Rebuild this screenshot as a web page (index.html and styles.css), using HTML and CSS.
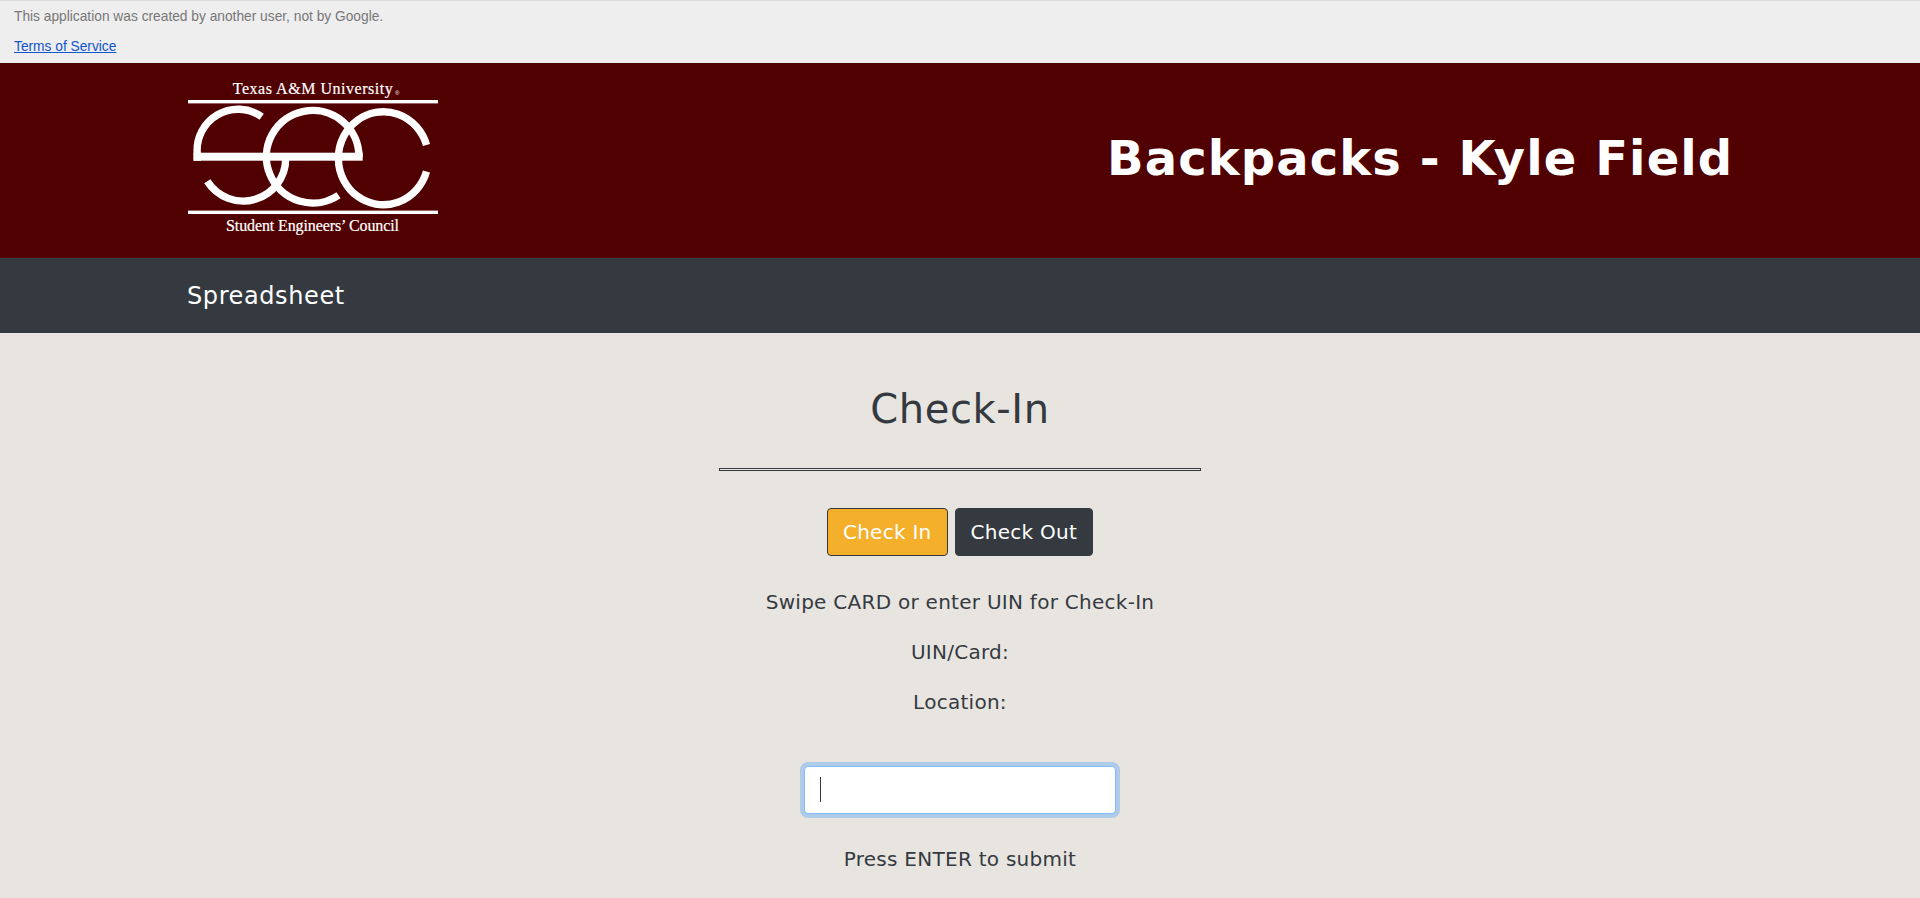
FILE: index.html
```html
<!DOCTYPE html>
<html lang="en">
<head>
<meta charset="utf-8">
<title>Backpacks - Kyle Field</title>
<link rel="stylesheet" href="styles.css">
</head>
<body>
<div class="notice">
  <p class="notice-text">This application was created by another user, not by Google.</p>
  <a class="notice-link" href="#">Terms of Service</a>
</div>
<header class="masthead">
  <svg class="logo" viewBox="0 0 290 175" width="290" height="175" role="img" aria-label="Texas A&amp;M University Student Engineers' Council">
    <text class="logo-top" x="62.700" y="24" textLength="160">Texas A&amp;M University</text>
    <text class="logo-reg" x="225" y="25">®</text>
    <rect class="logo-fill" x="18" y="30" width="250" height="3.400"/>
    <rect class="logo-fill" x="18" y="140.600" width="250" height="3.400"/>
    <rect class="logo-fill" x="23.500" y="82.700" width="169.200" height="8"/>
    <g class="logo-stroke">
      <path d="M91.700 46.700 A41 41 0 0 0 27.300 84 V90.700"/>
      <path d="M37.300 111.300 A42.500 42.500 0 0 0 115.700 88"/>
      <path d="M168.500 125.200 A46.300 46.300 0 1 1 189 87"/>
      <path d="M256.500 75 A45 46.500 0 1 0 256.500 101.500"/>
    </g>
    <text class="logo-bottom" x="56" y="161" textLength="173">Student Engineers’ Council</text>
  </svg>
  <h1 class="site-title">Backpacks - Kyle Field</h1>
</header>
<nav class="navbar"><a class="nav-link" href="#">Spreadsheet</a></nav>
<main class="content">
  <h2 class="heading">Check-In</h2>
  <hr class="rule">
  <div class="actions">
    <button class="btn btn-gold" type="button">Check In</button>
    <button class="btn btn-dark" type="button">Check Out</button>
  </div>
  <p class="line">Swipe CARD or enter UIN for Check-In</p>
  <p class="line">UIN/Card:</p>
  <p class="line">Location:</p>
  <div class="field">
    <input class="input" type="text" aria-label="UIN or card">
    <span class="caret"></span>
  </div>
  <p class="line hint">Press ENTER to submit</p>
</main>
</body>
</html>
```
FILE: styles.css
```css
* { box-sizing: border-box; }
html, body { height: 100%; }
body {
  margin: 0;
  overflow: hidden;
  background: #e8e5e0;
  color: #343a40;
  font-family: "DejaVu Sans", Verdana, sans-serif;
  font-size: 20px;
  letter-spacing: 0.27px;
}
.notice {
  height: 63px;
  padding: 8px 14px 0;
  background: #eeeeee;
  border-top: 1px solid #dcdcdc;
  font-family: "Liberation Sans", Arial, sans-serif;
  font-size: 13.750px;
  line-height: 16px;
  letter-spacing: 0;
}
.notice-text { margin: 0 0 14px; color: #777777; }
.notice-link { color: #1155cc; }
.masthead {
  height: 195px;
  padding-left: 170px;
  display: flex;
  align-items: flex-start;
  background: #500000;
  color: #ffffff;
}
.logo { margin-top: 7px; flex: none; }
.logo-top, .logo-bottom {
  fill: #ffffff;
  stroke: #ffffff;
  stroke-width: 0.2;
  font-family: "Liberation Serif", serif;
  font-size: 16px;
  letter-spacing: 0;
}
.logo-reg { fill: #ffffff; font-size: 6px; font-family: "Liberation Sans", sans-serif; }
.logo-fill { fill: #ffffff; }
.logo-stroke path { fill: none; stroke: #ffffff; stroke-width: 7.400; }
.site-title {
  margin: 0 0 0 647px;
  font-size: 48px;
  line-height: 190px;
  font-weight: 700;
  letter-spacing: 1.100px;
  white-space: nowrap;
}
.navbar {
  height: 75px;
  padding-left: 187px;
  display: flex;
  align-items: center;
  background: #343a40;
}
.nav-link { color: #ffffff; font-size: 24px; letter-spacing: 0.6px; text-decoration: none; }
.content {
  display: flex;
  flex-direction: column;
  align-items: center;
}
.heading {
  margin: 49px 0 0;
  font-size: 40px;
  line-height: 54px;
  font-weight: 400;
  letter-spacing: 0.6px;
}
.rule {
  width: 482px;
  height: 3px;
  margin: 32px 0 37px;
  border: 1px solid #343a40;
  background: #e8e5e0;
}
.actions { display: flex; gap: 7px; }
.btn {
  height: 48px;
  padding: 0 15px;
  border: 1px solid #343a40;
  border-radius: 4px;
  color: #ffffff;
  font: inherit;
  letter-spacing: inherit;
}
.btn-gold { background: #f4af2b; }
.btn-dark { background: #343a40; }
.line { margin: 0; height: 50px; line-height: 50px; white-space: nowrap; }
.actions + .line { margin-top: 21px; }
.field {
  position: relative;
  width: 312px;
  height: 48px;
  margin-top: 39px;
  margin-bottom: 20px;
}
.input {
  display: block;
  width: 100%;
  height: 100%;
  border: 1px solid #80bdff;
  border-radius: 4px;
  background: #ffffff;
  box-shadow: 0 0 0 4px #afcbea;
  outline: none;
  caret-color: transparent;
}
.caret {
  position: absolute;
  left: 16px;
  top: 11px;
  width: 1px;
  height: 25px;
  background: #343a40;
}
```
